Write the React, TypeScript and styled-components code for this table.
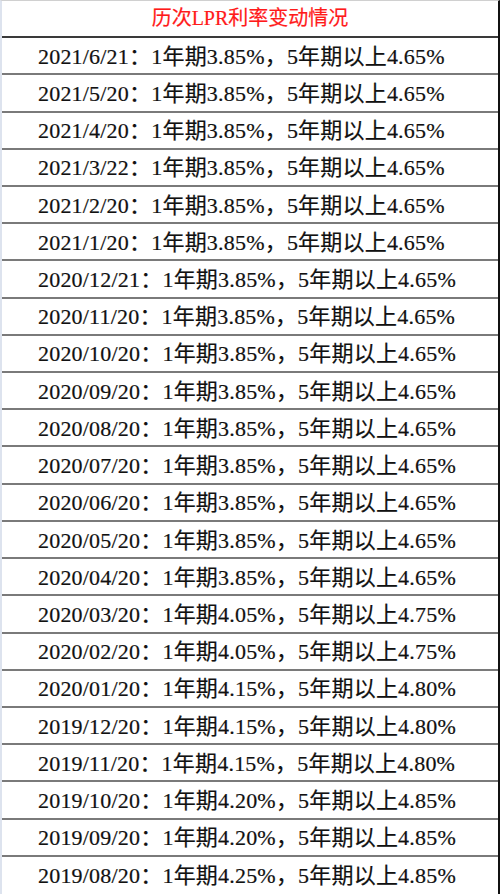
import React from "react";
import styled, { createGlobalStyle } from "styled-components";

const GlobalStyle = createGlobalStyle`
  html, body {
    margin: 0;
    padding: 0;
    background: #ffffff;
  }
`;

interface RateRow {
  date: string;
  oneYear: string;
  fiveYear: string;
}

const rows: RateRow[] = [
  { date: "2021/6/21", oneYear: "3.85", fiveYear: "4.65" },
  { date: "2021/5/20", oneYear: "3.85", fiveYear: "4.65" },
  { date: "2021/4/20", oneYear: "3.85", fiveYear: "4.65" },
  { date: "2021/3/22", oneYear: "3.85", fiveYear: "4.65" },
  { date: "2021/2/20", oneYear: "3.85", fiveYear: "4.65" },
  { date: "2021/1/20", oneYear: "3.85", fiveYear: "4.65" },
  { date: "2020/12/21", oneYear: "3.85", fiveYear: "4.65" },
  { date: "2020/11/20", oneYear: "3.85", fiveYear: "4.65" },
  { date: "2020/10/20", oneYear: "3.85", fiveYear: "4.65" },
  { date: "2020/09/20", oneYear: "3.85", fiveYear: "4.65" },
  { date: "2020/08/20", oneYear: "3.85", fiveYear: "4.65" },
  { date: "2020/07/20", oneYear: "3.85", fiveYear: "4.65" },
  { date: "2020/06/20", oneYear: "3.85", fiveYear: "4.65" },
  { date: "2020/05/20", oneYear: "3.85", fiveYear: "4.65" },
  { date: "2020/04/20", oneYear: "3.85", fiveYear: "4.65" },
  { date: "2020/03/20", oneYear: "4.05", fiveYear: "4.75" },
  { date: "2020/02/20", oneYear: "4.05", fiveYear: "4.75" },
  { date: "2020/01/20", oneYear: "4.15", fiveYear: "4.80" },
  { date: "2019/12/20", oneYear: "4.15", fiveYear: "4.80" },
  { date: "2019/11/20", oneYear: "4.15", fiveYear: "4.80" },
  { date: "2019/10/20", oneYear: "4.20", fiveYear: "4.85" },
  { date: "2019/09/20", oneYear: "4.20", fiveYear: "4.85" },
  { date: "2019/08/20", oneYear: "4.25", fiveYear: "4.85" },
];

const App: React.FC = () => {
  return (
    <>
      <GlobalStyle />
      <Sheet>
        <HeaderRow>
          <Title>历次LPR利率变动情况</Title>
        </HeaderRow>
        {rows.map((row, i) => (
          <DataRow key={row.date} $last={i === rows.length - 1}>
            <CellText>
              {row.date}：1年期{row.oneYear}%，5年期以上{row.fiveYear}%
            </CellText>
          </DataRow>
        ))}
      </Sheet>
    </>
  );
};

const Sheet = styled.div`
  box-sizing: border-box;
  width: 500px;
  height: 894px;
  display: grid;
  grid-template-rows: repeat(24, 1fr);
  border-top: 1px solid #d0d0d0;
  border-left: 2px solid #dde3ee;
  border-right: 2px solid #111111;
  background: #ffffff;
`;

const HeaderRow = styled.div`
  box-sizing: border-box;
  display: flex;
  align-items: center;
  justify-content: center;
  border-bottom: 2px solid #3a3a3a;
`;

const Title = styled.span`
  font-family: "Liberation Serif", "Noto Sans CJK SC", serif;
  font-size: 20px;
  line-height: 1;
  color: #ff1a1a;
  padding-bottom: 2px;
  -webkit-text-stroke: 0.2px #ff1a1a;
`;

const DataRow = styled.div<{ $last?: boolean }>`
  box-sizing: border-box;
  display: flex;
  align-items: center;
  justify-content: flex-start;
  padding-left: 36px;
  border-bottom: ${(props) => (props.$last ? "none" : "2px solid #7a7a7a")};
`;

const CellText = styled.span`
  font-family: "Liberation Serif", "Noto Sans CJK SC", serif;
  font-size: 22px;
  line-height: 1;
  letter-spacing: 0.2px;
  color: #111111;
  white-space: nowrap;
  padding-top: 2px;
  -webkit-text-stroke: 0.2px #111111;
`;

export default App;
